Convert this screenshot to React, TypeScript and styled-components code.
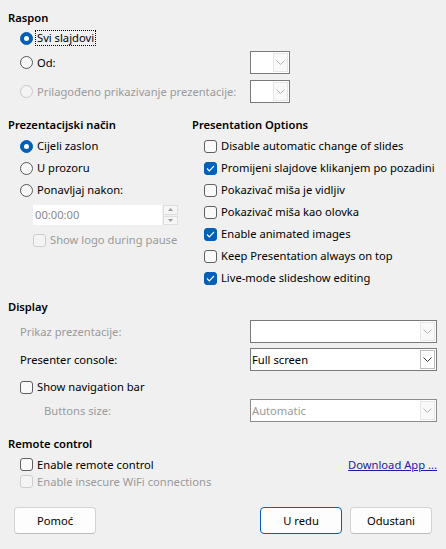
import React from 'react';
import styled, { createGlobalStyle } from 'styled-components';

const GlobalStyle = createGlobalStyle`
  html, body {
    margin: 0;
    padding: 0;
    background: #f0f0f0;
  }
  body {
    font-family: "Noto Sans", "Segoe UI", sans-serif;
    font-size: 11.2px;
    color: #000;
  }
`;

const Dialog = styled.div`
  width: 446px;
  height: 549px;
  box-sizing: border-box;
  padding: 10px 9px 0 8px;
  display: flex;
  flex-direction: column;
  background: #f0f0f0;
`;

const Heading = styled.div<{ $top?: number }>`
  font-weight: 600;
  height: 16px;
  line-height: 16px;
  margin-top: ${p => p.$top ?? 0}px;
`;

const Row = styled.div<{ $top?: number; $indent?: number; $h?: number }>`
  display: flex;
  align-items: center;
  gap: 4px;
  height: ${p => p.$h ?? 22}px;
  margin-top: ${p => p.$top ?? 0}px;
  padding-left: ${p => p.$indent ?? 12}px;
`;

const FieldRow = styled.div<{ $top?: number; $indent?: number; $label: number; $h?: number }>`
  display: grid;
  grid-template-columns: ${p => p.$label}px 1fr;
  align-items: center;
  height: ${p => p.$h ?? 23}px;
  margin-top: ${p => p.$top ?? 0}px;
  padding-left: ${p => p.$indent ?? 12}px;
`;

const Label = styled.span<{ $disabled?: boolean; $focus?: boolean }>`
  line-height: 14px;
  white-space: nowrap;
  color: ${p => (p.$disabled ? '#9a9a9a' : '#000')};
  outline: ${p => (p.$focus ? '1px dotted #000' : 'none')};
  padding: 0 1px;
  margin-left: -1px;
`;

const RadioDot = styled.span<{ $checked?: boolean; $disabled?: boolean }>`
  flex: none;
  width: 13px;
  height: 13px;
  box-sizing: border-box;
  border-radius: 50%;
  border: 1px solid ${p => (p.$disabled ? '#c8c8c8' : p.$checked ? '#005fb8' : '#5a5a5a')};
  background: ${p => (p.$checked ? '#005fb8' : p.$disabled ? '#f4f4f4' : '#f7f7f7')};
  display: flex;
  align-items: center;
  justify-content: center;
  &::after {
    content: '';
    width: 5px;
    height: 5px;
    border-radius: 50%;
    background: #fff;
    display: ${p => (p.$checked ? 'block' : 'none')};
  }
`;

const CheckBox = styled.span<{ $checked?: boolean; $disabled?: boolean }>`
  flex: none;
  width: 13px;
  height: 13px;
  box-sizing: border-box;
  border-radius: 3px;
  border: 1px solid ${p => (p.$disabled ? '#cdcdcd' : p.$checked ? '#005fb8' : '#5f5f5f')};
  background: ${p => (p.$checked ? '#005fb8' : p.$disabled ? '#f4f4f4' : '#f9f9f9')};
  display: flex;
  align-items: center;
  justify-content: center;
`;

const Columns = styled.div`
  display: grid;
  grid-template-columns: 184px 1fr;
  margin-top: 14px;
`;

const Column = styled.div`
  display: flex;
  flex-direction: column;
`;

const SpinField = styled.div`
  display: flex;
  align-items: stretch;
  gap: 1px;
  height: 20px;
  margin: 4px 0 0 25px;
`;

const SpinInput = styled.div`
  width: 129px;
  background: #fff;
  color: #8a8a8a;
  line-height: 20px;
  padding-left: 2px;
  box-sizing: border-box;
`;

const SpinButtons = styled.div`
  width: 15px;
  display: flex;
  flex-direction: column;
  gap: 1px;
`;

const SpinButton = styled.div`
  flex: 1;
  background: #f6f6f6;
  border: 1px solid #dedede;
  display: flex;
  align-items: center;
  justify-content: center;
`;

const Combo = styled.div<{ $disabled?: boolean }>`
  height: 23px;
  box-sizing: border-box;
  border: 1px solid ${p => (p.$disabled ? '#8c8c8c' : '#7a7a7a')};
  background: #fff;
  display: flex;
  align-items: stretch;
  padding: 1px;
`;

const ComboSmall = styled(Combo)`
  width: 40px;
`;

const ComboText = styled.span<{ $disabled?: boolean }>`
  flex: 1;
  line-height: 19px;
  color: ${p => (p.$disabled ? '#9a9a9a' : '#000')};
  white-space: nowrap;
`;

const ComboButton = styled.span<{ $disabled?: boolean }>`
  width: 15px;
  box-sizing: border-box;
  background: ${p => (p.$disabled ? '#f9f9f9' : '#fff')};
  border: 1px solid ${p => (p.$disabled ? '#e6e6e6' : '#bdbdbd')};
  display: flex;
  align-items: center;
  justify-content: center;
`;

const RemoteRow = styled.div<{ $top?: number }>`
  display: flex;
  align-items: center;
  justify-content: space-between;
  height: 17px;
  margin-top: ${p => p.$top ?? 0}px;
  padding-left: 12px;
`;

const Group = styled.span`
  display: flex;
  align-items: center;
  gap: 4px;
`;

const Link = styled.a`
  color: #1b1ba6;
  text-decoration: underline;
  line-height: 14px;
  cursor: pointer;
`;

const ButtonBar = styled.div`
  margin-top: auto;
  padding: 0 5px 15px 6px;
  display: flex;
  align-items: center;
  gap: 8px;
`;

const Button = styled.button<{ $default?: boolean }>`
  width: 82px;
  height: 27px;
  box-sizing: border-box;
  border-radius: 4px;
  font: inherit;
  color: #000;
  background: #fdfdfd;
  border: 1px solid ${p => (p.$default ? '#005fb8' : '#d3d3d3')};
  border-bottom-color: ${p => (p.$default ? '#005fb8' : '#bdbdbd')};
  padding: 0;
`;

const Spacer = styled.div`
  flex: 1;
`;

const Chevron: React.FC<{ disabled?: boolean }> = ({ disabled }) => (
  <svg width="9" height="5" viewBox="0 0 9 5">
    <polyline
      points="0.5,0.5 4.5,4.5 8.5,0.5"
      fill="none"
      stroke={disabled ? '#b5b5b5' : '#333'}
      strokeWidth="1"
    />
  </svg>
);

const Tick = () => (
  <svg width="9" height="7" viewBox="0 0 9 7">
    <polyline points="1,3.5 3.3,5.8 8,1" fill="none" stroke="#fff" strokeWidth="1.2" />
  </svg>
);

const Radio: React.FC<{ label: string; checked?: boolean; disabled?: boolean; focus?: boolean }> = ({
  label,
  checked,
  disabled,
  focus,
}) => (
  <>
    <RadioDot $checked={checked} $disabled={disabled} />
    <Label $disabled={disabled} $focus={focus}>{label}</Label>
  </>
);

const Check: React.FC<{ label: string; checked?: boolean; disabled?: boolean }> = ({ label, checked, disabled }) => (
  <>
    <CheckBox $checked={checked} $disabled={disabled}>{checked && <Tick />}</CheckBox>
    <Label $disabled={disabled}>{label}</Label>
  </>
);

const options = [
  { label: 'Disable automatic change of slides', checked: false },
  { label: 'Promijeni slajdove klikanjem po pozadini', checked: true },
  { label: 'Pokazivač miša je vidljiv', checked: false },
  { label: 'Pokazivač miša kao olovka', checked: false },
  { label: 'Enable animated images', checked: true },
  { label: 'Keep Presentation always on top', checked: false },
  { label: 'Live-mode slideshow editing', checked: true },
];

const App: React.FC = () => {
  return (
    <Dialog>
      <GlobalStyle />
      <Heading>Raspon</Heading>
      <Row $top={1}>
        <Radio label="Svi slajdovi" checked focus />
      </Row>
      <FieldRow $top={2} $label={230}>
        <Group>
          <Radio label="Od:" />
        </Group>
        <ComboSmall>
          <ComboText />
          <ComboButton $disabled>
            <Chevron disabled />
          </ComboButton>
        </ComboSmall>
      </FieldRow>
      <FieldRow $top={6} $label={230}>
        <Group>
          <Radio label="Prilagođeno prikazivanje prezentacije:" disabled />
        </Group>
        <ComboSmall>
          <ComboText />
          <ComboButton $disabled>
            <Chevron disabled />
          </ComboButton>
        </ComboSmall>
      </FieldRow>

      <Columns>
        <Column>
          <Heading>Prezentacijski način</Heading>
          <Row $top={2}>
            <Radio label="Cijeli zaslon" checked />
          </Row>
          <Row>
            <Radio label="U prozoru" />
          </Row>
          <Row>
            <Radio label="Ponavljaj nakon:" />
          </Row>
          <SpinField>
            <SpinInput>00:00:00</SpinInput>
            <SpinButtons>
              <SpinButton>
                <svg width="5" height="3" viewBox="0 0 5 3">
                  <polygon points="0,3 2.5,0 5,3" fill="#9a9a9a" />
                </svg>
              </SpinButton>
              <SpinButton>
                <svg width="5" height="3" viewBox="0 0 5 3">
                  <polygon points="0,0 2.5,3 5,0" fill="#9a9a9a" />
                </svg>
              </SpinButton>
            </SpinButtons>
          </SpinField>
          <Row $top={4} $indent={25}>
            <Check label="Show logo during pause" disabled />
          </Row>
        </Column>
        <Column>
          <Heading>Presentation Options</Heading>
          {options.map((o, i) => (
            <Row key={o.label} $top={i === 0 ? 2 : 0}>
              <Check label={o.label} checked={o.checked} />
            </Row>
          ))}
        </Column>
      </Columns>

      <Heading $top={10}>Display</Heading>
      <FieldRow $top={5} $label={230}>
        <Label $disabled>Prikaz prezentacije:</Label>
        <Combo>
          <ComboText />
          <ComboButton $disabled>
            <Chevron disabled />
          </ComboButton>
        </Combo>
      </FieldRow>
      <FieldRow $top={5} $label={230}>
        <Label>Presenter console:</Label>
        <Combo>
          <ComboText>Full screen</ComboText>
          <ComboButton>
            <Chevron />
          </ComboButton>
        </Combo>
      </FieldRow>
      <Row $top={5}>
        <Check label="Show navigation bar" />
      </Row>
      <FieldRow $top={1} $label={206} $indent={36}>
        <Label $disabled>Buttons size:</Label>
        <Combo $disabled>
          <ComboText $disabled>Automatic</ComboText>
          <ComboButton $disabled>
            <Chevron disabled />
          </ComboButton>
        </Combo>
      </FieldRow>

      <Heading $top={14}>Remote control</Heading>
      <RemoteRow $top={4}>
        <Group>
          <Check label="Enable remote control" />
        </Group>
        <Link>Download App ...</Link>
      </RemoteRow>
      <RemoteRow>
        <Group>
          <Check label="Enable insecure WiFi connections" disabled />
        </Group>
      </RemoteRow>

      <ButtonBar>
        <Button>Pomoć</Button>
        <Spacer />
        <Button $default>U redu</Button>
        <Button>Odustani</Button>
      </ButtonBar>
    </Dialog>
  );
};

export default App;
